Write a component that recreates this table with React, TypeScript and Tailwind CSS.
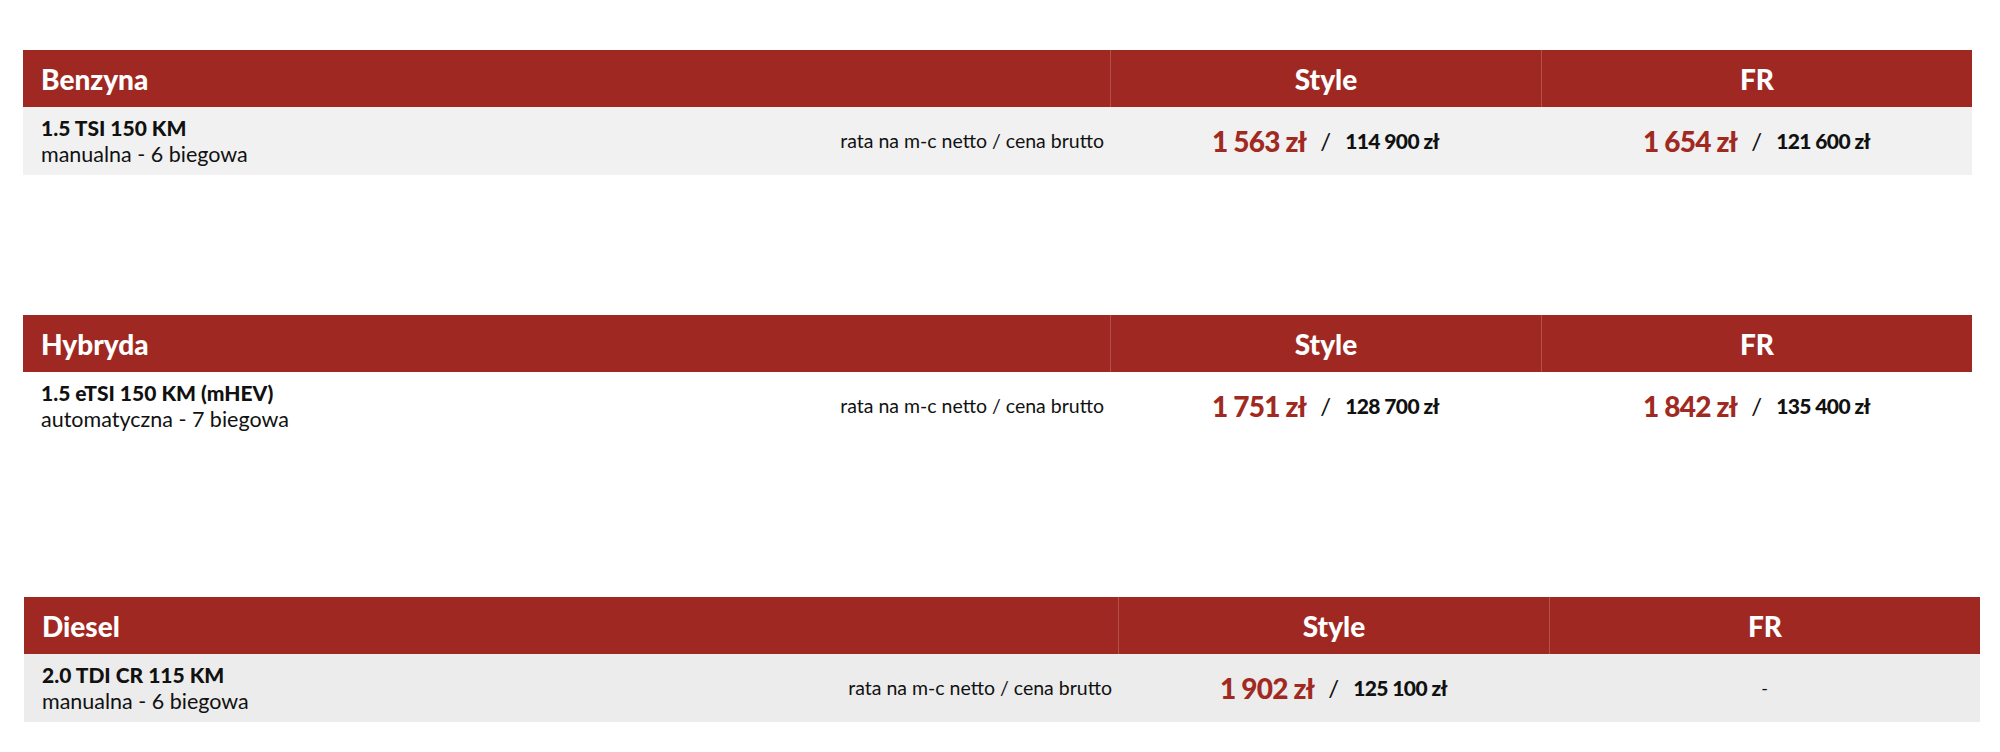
import React from 'react';

interface Price {
  rate: string;
  gross: string;
}

interface Section {
  title: string;
  model: string;
  gearbox: string;
  style: Price;
  fr: Price | null;
  rowBg: string;
  wrap: string;
}

const sections: Section[] = [
  {
    title: 'Benzyna',
    model: '1.5 TSI 150 KM',
    gearbox: 'manualna - 6 biegowa',
    style: { rate: '1 563 zł', gross: '114 900 zł' },
    fr: { rate: '1 654 zł', gross: '121 600 zł' },
    rowBg: 'bg-[#f1f1f1]',
    wrap: 'ml-[23px] w-[1949px] mt-[50px]',
  },
  {
    title: 'Hybryda',
    model: '1.5 eTSI 150 KM (mHEV)',
    gearbox: 'automatyczna - 7 biegowa',
    style: { rate: '1 751 zł', gross: '128 700 zł' },
    fr: { rate: '1 842 zł', gross: '135 400 zł' },
    rowBg: 'bg-white',
    wrap: 'ml-[23px] w-[1949px] mt-[140px]',
  },
  {
    title: 'Diesel',
    model: '2.0 TDI CR 115 KM',
    gearbox: 'manualna - 6 biegowa',
    style: { rate: '1 902 zł', gross: '125 100 zł' },
    fr: null,
    rowBg: 'bg-[#ececec]',
    wrap: 'ml-[24px] w-[1956px] mt-[157px]',
  },
];

function PriceCell({ price }: { price: Price | null }) {
  if (!price) {
    return <div className="flex items-center justify-center text-[18px] text-[#111]">-</div>;
  }
  return (
    <div className="flex items-center justify-center">
      <span className="text-[28px] font-black tracking-[-0.8px] text-[#a02a21]">{price.rate}</span>
      <span className="mx-[14px] text-[24px] text-[#111]">/</span>
      <span className="text-[21px] font-black tracking-[-0.6px] text-[#111]">{price.gross}</span>
    </div>
  );
}

function PriceTable({ s }: { s: Section }) {
  return (
    <div className={s.wrap}>
      <div className="grid h-[57px] grid-cols-[1fr_431px_431px] bg-[#9f2922] text-white">
        <div className="flex items-center pl-[18px] text-[28px] font-black">{s.title}</div>
        <div className="flex items-center justify-center border-l border-[#b5504a] text-[28px] font-black">Style</div>
        <div className="flex items-center justify-center border-l border-[#b5504a] text-[28px] font-black">FR</div>
      </div>
      <div className={`grid h-[68px] grid-cols-[1fr_431px_431px] ${s.rowBg}`}>
        <div className="flex items-center justify-between pl-[18px] pr-[6px]">
          <div className="flex flex-col leading-[27px] text-[#111]">
            <span className="text-[21px] font-black">{s.model}</span>
            <span className="text-[21.5px]">{s.gearbox}</span>
          </div>
          <span className="text-[19.5px] text-[#111]">rata na m-c netto / cena brutto</span>
        </div>
        <PriceCell price={s.style} />
        <PriceCell price={s.fr} />
      </div>
    </div>
  );
}

export default function App() {
  return (
    <div className="h-[752px] w-[2000px] overflow-hidden bg-white font-['Lato',sans-serif]">
      {sections.map((s) => (
        <PriceTable key={s.title} s={s} />
      ))}
    </div>
  );
}
